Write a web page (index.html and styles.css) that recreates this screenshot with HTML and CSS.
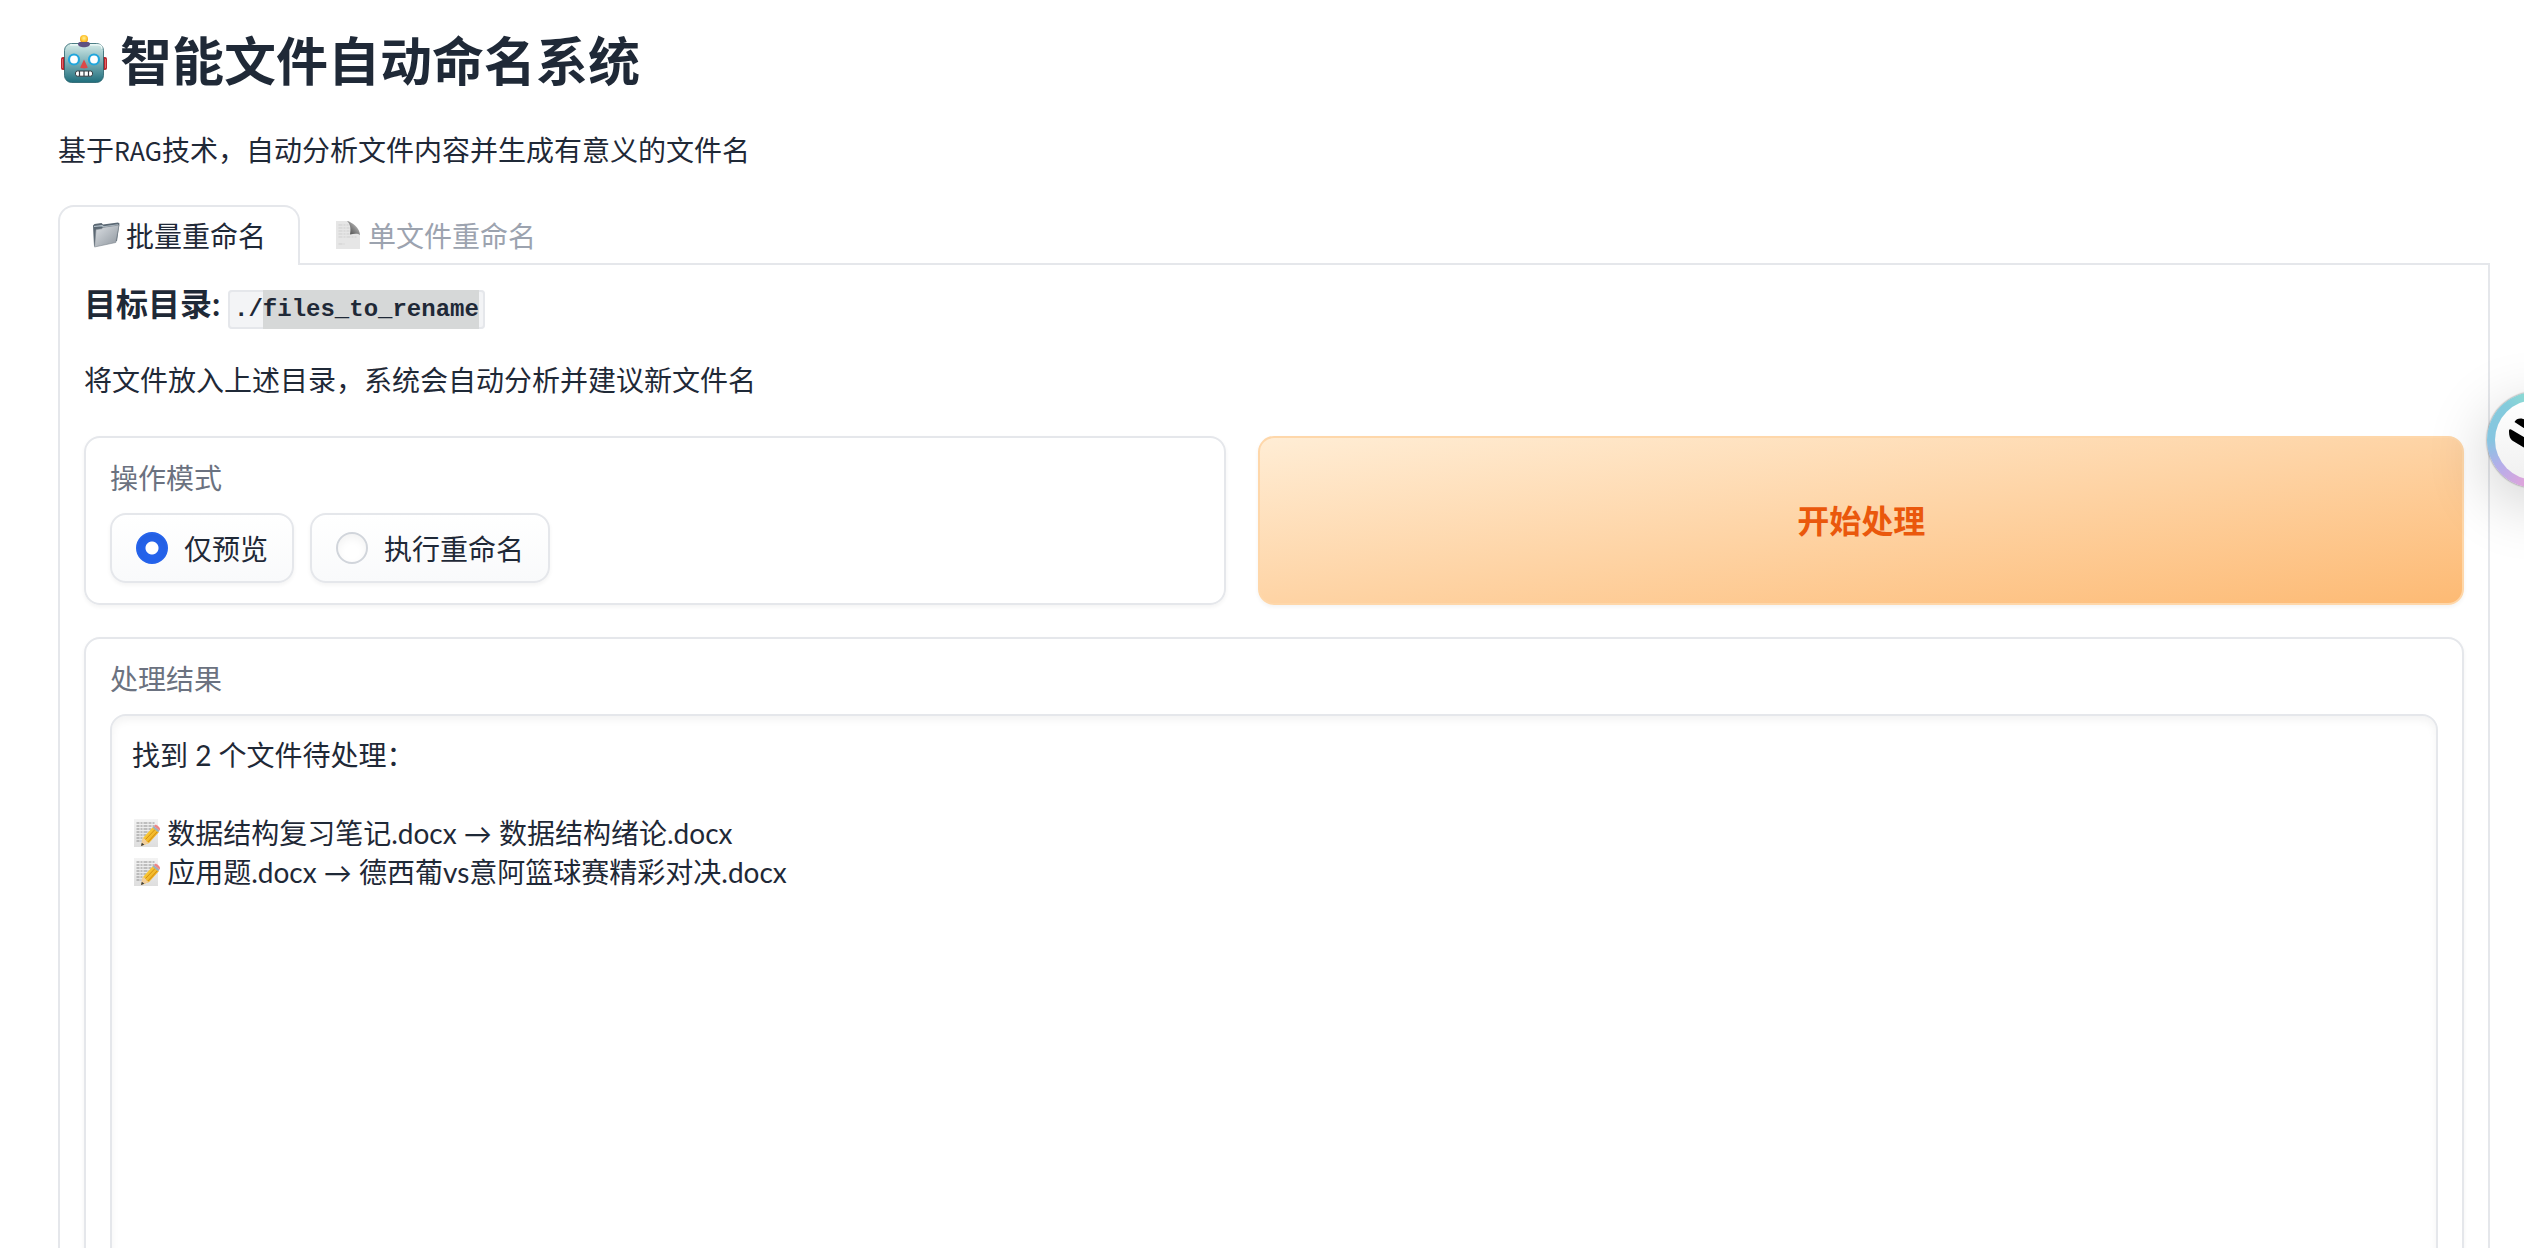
FILE: index.html
```
<!DOCTYPE html>
<html lang="zh-CN">
<head>
  <meta charset="UTF-8" />
  <meta name="viewport" content="width=device-width, initial-scale=1.0" />
  <title>智能文件自动命名系统</title>
  <link rel="stylesheet" href="styles.css">
</head>
<body>
  <!-- Shared icon shapes -->
  <svg class="defs" width="0" height="0" aria-hidden="true">
    <defs>
      <linearGradient id="paper" x1="0" y1="0" x2="0" y2="1">
        <stop offset="0" stop-color="#f3f3f3" />
        <stop offset="1" stop-color="#dedede" />
      </linearGradient>
      <linearGradient id="pencil" x1="0" y1="0" x2="1" y2="1">
        <stop offset="0" stop-color="#ffdf4a" />
        <stop offset="1" stop-color="#e89a10" />
      </linearGradient>
      <symbol id="memo" viewBox="0 0 28 30">
        <rect x="2" y="1" width="24" height="28" fill="url(#paper)" />
        <path d="M4.500 5h19M4.500 8h18M4.500 11h15M4.500 14h13M4.500 17h10M4.500 20h7M4.500 23h5" stroke="#8d8d8d" stroke-width="1" stroke-dasharray="3 1 2 1 4 1" fill="none" />
        <path d="M9 28l2-8L21 9l6 5-10 11z" fill="url(#pencil)" />
        <path d="M13 22L23 11.500M15.500 24.500L25.500 13.500" stroke="#c98208" stroke-width=".8" fill="none" />
        <path d="M9 28l2-8 2.500 1.500 1 2 2.500 1.500z" fill="#f2cf9c" />
        <path d="M9 28l.8-3.300 2.600 2z" fill="#3a3a3a" />
        <path d="M20.500 9.500l1.500-1.600 5.600 4.700-1.500 1.700z" fill="#9bb0bd" />
        <path d="M22 7.900l1-1c1-1 5.300 2.200 5 4.500l-.6 1.200z" fill="#ee8585" />
      </symbol>
    </defs>
  </svg>

  <main class="container">
    <h1>
      <svg class="robot" viewBox="0 0 52 56" aria-hidden="true">
        <defs>
          <linearGradient id="face" x1="0" y1="0" x2="0" y2="1">
            <stop offset="0" stop-color="#d5ece9" />
            <stop offset=".5" stop-color="#79aeb5" />
            <stop offset="1" stop-color="#1f6e7c" />
          </linearGradient>
          <radialGradient id="bulb" cx=".5" cy=".4" r=".6">
            <stop offset="0" stop-color="#fff09a" />
            <stop offset=".6" stop-color="#ffc62e" />
            <stop offset="1" stop-color="#e58a1b" />
          </radialGradient>
        </defs>
        <rect x="3" y="26" width="7" height="13" rx="2" fill="#b8272d" />
        <rect x="42" y="26" width="7" height="13" rx="2" fill="#b8272d" />
        <path d="M4.500 28v9M47.500 28v9" stroke="#e2656a" stroke-width="1" />
        <circle cx="26" cy="8" r="4" fill="url(#bulb)" />
        <rect x="6.500" y="12.500" width="39" height="39" rx="7" fill="url(#face)" stroke="#245f6a" stroke-width=".8" />
        <path d="M12 13.800h28c3 0 4 1.500 4 4" stroke="#f2fbfa" stroke-width="1.200" fill="none" />
        <path d="M20 13c0-2.500 3-2 6-2s6-.5 6 2-3 3.200-6 3.200-6-.7-6-3.200z" fill="#5e5080" />
        <circle cx="16" cy="28.500" r="5" fill="#fff" stroke="#21a6dc" stroke-width="2.200" />
        <circle cx="36" cy="28.500" r="5" fill="#fff" stroke="#21a6dc" stroke-width="2.200" />
        <path d="M26 28.500l3.800 8c-1.800 1.200-5.800 1.200-7.600 0z" fill="#dc4848" />
        <rect x="17.500" y="40" width="17" height="5.200" rx="2" fill="#fff" stroke="#353c42" stroke-width="1" />
        <path d="M21.500 40v5M26 40v5M30.500 40v5" stroke="#353c42" stroke-width="1.200" />
      </svg>
      智能文件自动命名系统
    </h1>
    <p class="intro">基于<span class="latin">RAG</span>技术，自动分析文件内容并生成有意义的文件名</p>

    <div class="tabs" role="tablist">
      <button class="tab selected" role="tab" aria-selected="true">
        <svg class="emoji" viewBox="0 0 28 30" aria-hidden="true">
          <defs>
            <linearGradient id="folder" x1="0" y1="0" x2="1" y2="1">
              <stop offset="0" stop-color="#dde1e5" />
              <stop offset="1" stop-color="#8d959d" />
            </linearGradient>
          </defs>
          <path d="M1 5.500l1.500-1.500 7-1 1.500 1.500L26 2.500l1.500 1L25 21 2 26z" fill="#5b6873" />
          <path d="M2 6.500l8-.9 1.500 1.200L26 4.800" stroke="#b9c6cf" stroke-width="1.200" fill="none" />
          <path d="M4 9.500L9.500 8.700l1.500-1.300L27 5l-3.200 17.500L2.500 27z" fill="url(#folder)" stroke="#7d868e" stroke-width=".6" />
        </svg>
        批量重命名
      </button>
      <button class="tab" role="tab" aria-selected="false">
        <svg class="emoji" viewBox="0 0 28 30" aria-hidden="true">
          <defs>
            <linearGradient id="curl" x1="0" y1="1" x2="1" y2="0">
              <stop offset="0" stop-color="#3f3f3f" />
              <stop offset=".5" stop-color="#8a8a8a" />
              <stop offset="1" stop-color="#e4e4e4" />
            </linearGradient>
          </defs>
          <path d="M2 1h13l11 13v15H2z" fill="#e6e6e6" />
          <path d="M4.500 5h10M4.500 8h11M4.500 11h11M4.500 14h11M4.500 17h18M4.500 24h6" stroke="#cfcfcf" stroke-width="1" stroke-dasharray="4 1 2 1" />
          <path d="M13 1c5 1 13 7 13 14-2-2-6-1.500-10-.5C17 9 16.500 4 13 1z" fill="url(#curl)" />
        </svg>
        单文件重命名
      </button>
    </div>

    <section class="panel" role="tabpanel">
      <h3>目标目录: <code>./<mark>files_to_rename</mark></code></h3>
      <p class="hint">将文件放入上述目录，系统会自动分析并建议新文件名</p>

      <div class="row">
        <fieldset class="block">
          <legend class="block-label">操作模式</legend>
          <div class="options">
            <label class="option"><input type="radio" name="mode" checked>仅预览</label>
            <label class="option"><input type="radio" name="mode">执行重命名</label>
          </div>
        </fieldset>
        <button class="primary">开始处理</button>
      </div>

      <div class="block">
        <label class="block-label" for="result">处理结果</label>
        <div class="result">
          <textarea id="result" rows="20" readonly>找到 2 个文件待处理：

　 数据结构复习笔记.docx → 数据结构绪论.docx
　 应用题.docx → 德西葡vs意阿篮球赛精彩对决.docx</textarea>
          <div class="marks" aria-hidden="true">
            <svg><use href="#memo" /></svg>
            <svg><use href="#memo" /></svg>
          </div>
        </div>
      </div>
    </section>
  </main>

  <button class="assistant" aria-label="助手">
    <svg viewBox="0 0 80 80" aria-hidden="true">
      <path d="M19.500 22c2-4 7-4.500 11-2l34 21-5 7z" />
      <path d="M14 31c0-2 1.500-2 3-1l49 29c-3 6-9 5-13 3L18 41c-3-2-4-5-4-10z" />
    </svg>
  </button>
</body>
</html>
```
FILE: styles.css
```
*, *::before, *::after {
  margin: 0;
  padding: 0;
  box-sizing: border-box;
}
html, body {
  height: 100%;
  overflow: hidden;
}
body {
  font-family: "Noto Sans CJK SC", sans-serif;
  font-size: 28px;
  line-height: 42px;
  color: #1f2937;
  background: #fff;
}
button, input, textarea {
  font: inherit;
  color: inherit;
}
.defs {
  position: absolute;
}
.container {
  padding: 21px 34px 0 58px;
}

/* Header */
h1 {
  display: flex;
  align-items: center;
  gap: 10px;
  font-size: 52px;
  line-height: 76px;
  font-weight: 700;
}
.robot {
  width: 52px;
  height: 56px;
}
.intro {
  margin: 31px 0 34px;
}
.latin {
  font-size: 25px;
}

/* Tabs */
.tabs {
  display: flex;
  border-bottom: 2px solid #e5e7eb;
}
.tab {
  display: flex;
  align-items: center;
  gap: 6px;
  height: 60px;
  padding: 0 32px 2px;
  margin-bottom: -2px;
  border: 2px solid transparent;
  border-bottom: 0;
  border-radius: 16px 16px 0 0;
  background: transparent;
  color: #9ca3af;
}
.tab.selected {
  border-color: #e5e7eb;
  background: #fff;
  color: #1f2937;
}
.emoji {
  width: 28px;
  height: 30px;
}
.panel {
  padding: 15px 24px 24px;
  border: 2px solid #e5e7eb;
  border-top: 0;
}

/* Directory info */
h3 {
  font-family: Lato, "Noto Sans CJK SC", sans-serif;
  font-size: 32px;
  line-height: 48px;
  font-weight: 700;
}
code {
  padding: 4px;
  border: 2px solid #e5e7eb;
  border-radius: 4px;
  background: #f3f4f6;
  font-family: "Liberation Mono", monospace;
  font-size: 24px;
}
mark {
  padding: 6px 0;
  background: #d6d8d8;
  color: inherit;
}
.hint {
  margin: 24px 0 36px;
}

/* Blocks */
.row {
  display: grid;
  grid-template-columns: 18fr 19fr;
  gap: 32px;
  margin-bottom: 32px;
}
.block {
  min-width: 0;
  padding: 20px 24px;
  border: 2px solid #e5e7eb;
  border-radius: 16px;
  background: #fff;
  box-shadow: 0 2px 4px rgba(0, 0, 0, 0.05);
}
.block-label {
  display: block;
  float: left;
  width: 100%;
  margin-bottom: 17px;
  line-height: 38px;
  color: #6b7280;
}
.options {
  clear: both;
  display: flex;
  gap: 16px;
}
.option {
  display: flex;
  align-items: center;
  gap: 16px;
  padding: 12px 24px;
  border: 2px solid #e5e7eb;
  border-radius: 16px;
  background: linear-gradient(to bottom, #fff, #f9fafb);
  box-shadow: 0 2px 4px rgba(0, 0, 0, 0.05);
}
.option input {
  appearance: none;
  width: 32px;
  height: 32px;
  border: 2px solid #d1d5db;
  border-radius: 50%;
  background: #fff;
  box-shadow: inset 0 4px 8px rgba(0, 0, 0, 0.05);
}
.option input:checked {
  border-color: #2563eb;
  background: radial-gradient(circle, #fff 6px, #2563eb 7px);
}
.primary {
  padding-bottom: 4px;
  border: 2px solid #fed7aa;
  border-radius: 16px;
  background: linear-gradient(to bottom right, #ffedd5, #fdba74);
  box-shadow: 0 2px 4px rgba(0, 0, 0, 0.05);
  color: #ea580c;
  font-size: 32px;
  font-weight: 700;
}

/* Result */
.result {
  position: relative;
  clear: both;
}
textarea {
  display: block;
  width: 100%;
  padding: 20px;
  border: 2px solid #e5e7eb;
  border-radius: 16px;
  outline: none;
  resize: none;
  background: #fff;
  box-shadow: inset 0 4px 8px rgba(0, 0, 0, 0.05);
  font-family: Lato, "Noto Sans CJK SC", sans-serif;
  line-height: 39px;
}
.marks {
  position: absolute;
  top: 100px;
  left: 22px;
}
.marks svg {
  display: block;
  width: 28px;
  height: 30px;
  margin: 4px 0 9px;
}

/* Floating assistant */
.assistant {
  position: fixed;
  top: 392px;
  right: -59px;
  width: 96px;
  height: 96px;
  padding: 8px;
  border: 0;
  border-radius: 50%;
  background: conic-gradient(#8fe0d0, #f0a0d0 120deg, #dda5dc 195deg, #b3aeea 235deg, #86c5e0 270deg, #84cbdc 320deg, #8fe0d0);
  box-shadow: 0 0 2px rgba(0, 0, 0, 0.6), 0 16px 64px rgba(0, 0, 0, 0.2);
}
.assistant svg {
  display: block;
  width: 80px;
  height: 80px;
  border-radius: 50%;
  background: linear-gradient(to bottom, #fff, #f0f0f0);
}
```
